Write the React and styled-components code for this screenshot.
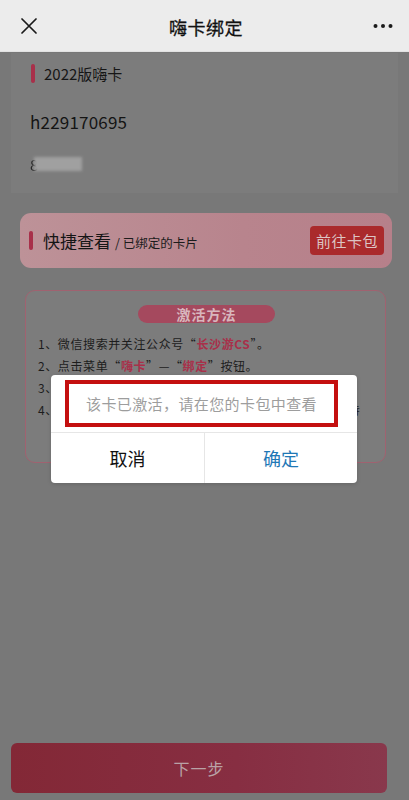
import React from "react";
import styled, { createGlobalStyle } from "styled-components";

const GlobalStyle = createGlobalStyle`
  html, body {
    margin: 0;
    padding: 0;
    background: #787878;
    font-family: "Noto Sans CJK SC", "Noto Sans", sans-serif;
  }
  * { box-sizing: border-box; }
`;

const Screen = styled.div`
  width: 409px;
  height: 800px;
  display: flex;
  flex-direction: column;
  background: #787878;
  position: relative;
  overflow: hidden;
`;

const Header = styled.header`
  height: 52px;
  flex: none;
  display: flex;
  align-items: center;
  justify-content: space-between;
  padding: 0 14px 0 17px;
  background: #ececec;
  border-bottom: 1px solid #e2e2e2;
`;

const HeaderTitle = styled.h1`
  margin: 0;
  font-size: 18px;
  font-weight: 400;
  color: #111;
  letter-spacing: 0.5px;
  padding-top: 3px;
  -webkit-text-stroke: 0.3px #111;
`;

const IconButton = styled.div`
  width: 24px;
  height: 24px;
  display: flex;
  align-items: center;
  justify-content: center;
`;

const Main = styled.main`
  flex: 1;
  display: flex;
  flex-direction: column;
  padding-top: 1px;
`;

const InfoCard = styled.section`
  margin: 0 11px 0 11px;
  height: 140px;
  background: #7c7c7c;
  padding: 10px 19px;
  display: flex;
  flex-direction: column;
`;

const SectionTitle = styled.div`
  display: flex;
  align-items: center;
  gap: 9px;
  font-size: 15px;
  color: #161616;
  padding-left: 1px;
`;

const Bar = styled.span`
  width: 4px;
  height: 19px;
  border-radius: 2px;
  background: #a8304a;
`;

const CardNo = styled.div`
  margin-top: 25px;
  font-size: 17px;
  color: #141414;
  letter-spacing: 0.2px;
`;

const Masked = styled.div`
  margin-top: 22px;
  display: flex;
  align-items: center;
  height: 16px;
`;

const MaskedDigit = styled.span`
  font-size: 15px;
  color: #222;
  filter: blur(0.6px);
`;

const MaskedBlur = styled.span`
  width: 48px;
  height: 14px;
  background: #a0a0a0;
  filter: blur(1.5px);
  margin-left: -4px;
`;

const QuickCard = styled.section`
  margin: 20px 17px 0 20px;
  height: 55px;
  border-radius: 11px;
  background: linear-gradient(90deg, #bd9298 0%, #b8848d 60%, #b6808a 100%);
  display: flex;
  align-items: center;
  justify-content: space-between;
  padding: 0 8px 0 9px;
`;

const QuickTitle = styled.div`
  display: flex;
  align-items: center;
  gap: 10px;
  font-size: 17px;
  color: #151515;
`;

const QuickSub = styled.span`
  font-size: 12.5px;
  margin-left: 4px;
  color: #1c1c1c;
`;

const SmallButton = styled.button`
  width: 74px;
  height: 29px;
  border: none;
  border-radius: 4px;
  background: #aa2a2c;
  color: #dcc4c4;
  font-family: inherit;
  font-size: 15px;
  letter-spacing: 0.5px;
  padding: 0;
`;

const GuideCard = styled.section`
  margin: 22px 23px 0 25px;
  height: 173px;
  border: 1.5px solid #a06270;
  border-radius: 10px;
  background: #7c7c7c;
  padding: 14px 10px 0 12px;
  display: flex;
  flex-direction: column;
  align-items: center;
  overflow: hidden;
`;

const Pill = styled.div`
  width: 137px;
  height: 18px;
  border-radius: 9px;
  background: #a5495e;
  color: #d8b6bd;
  font-size: 14px;
  font-weight: 700;
  line-height: 18px;
  text-align: center;
  letter-spacing: 1px;
`;

const Steps = styled.ol`
  list-style: none;
  margin: 11px 0 0 0;
  padding: 0;
  width: 100%;
  display: flex;
  flex-direction: column;
  gap: 3px;
`;

const Step = styled.li`
  font-size: 12px;
  line-height: 19px;
  letter-spacing: 0.6px;
  color: #1c1c1c;
  white-space: nowrap;
`;

const Em = styled.b`
  color: #a8304a;
`;

const Spacer = styled.div`
  flex: 1;
`;

const NextButton = styled.button`
  margin: 0 22px 7px 11px;
  height: 50px;
  border: none;
  border-radius: 6px;
  background: linear-gradient(90deg, #832836 0%, #872e42 60%, #89384c 100%);
  color: #b9a2a6;
  font-family: inherit;
  font-size: 16px;
  letter-spacing: 1px;
`;

const Dialog = styled.div`
  position: absolute;
  top: 375px;
  left: 51px;
  width: 306px;
  background: #fff;
  border-radius: 4px;
  display: flex;
  flex-direction: column;
  box-shadow: 0 1px 4px rgba(0, 0, 0, 0.15);
`;

const DialogBody = styled.div`
  height: 58px;
  padding: 5px 19px 5px 14px;
  border-bottom: 1px solid #e6e6e6;
`;

const Message = styled.div`
  height: 47px;
  border: 4px solid #c40f0f;
  display: flex;
  align-items: center;
  justify-content: center;
  color: #9d9d9d;
  font-size: 15px;
  letter-spacing: 0.4px;
`;

const DialogActions = styled.div`
  height: 50px;
  display: grid;
  grid-template-columns: 1fr 1fr;
`;

const DialogButton = styled.div`
  display: flex;
  align-items: center;
  justify-content: center;
  font-size: 18px;
  color: ${(p) => (p.primary ? "#1f78b6" : "#111")};
  border-left: ${(p) => (p.primary ? "1px solid #e6e6e6" : "none")};
`;

const CloseIcon = () => (
  <svg width="16" height="16" viewBox="0 0 16 16">
    <path d="M1 1 L15 15 M15 1 L1 15" stroke="#1a1a1a" strokeWidth="1.7" strokeLinecap="round" />
  </svg>
);

const MoreIcon = () => (
  <svg width="20" height="6" viewBox="0 0 20 6">
    <circle cx="2.5" cy="3" r="2" fill="#1a1a1a" />
    <circle cx="10" cy="3" r="2" fill="#1a1a1a" />
    <circle cx="17.5" cy="3" r="2" fill="#1a1a1a" />
  </svg>
);

export default function App() {
  return (
    <>
      <GlobalStyle />
      <Screen>
        <Header>
          <IconButton>
            <CloseIcon />
          </IconButton>
          <HeaderTitle>嗨卡绑定</HeaderTitle>
          <IconButton>
            <MoreIcon />
          </IconButton>
        </Header>
        <Main>
          <InfoCard>
            <SectionTitle>
              <Bar />
              2022版嗨卡
            </SectionTitle>
            <CardNo>h229170695</CardNo>
            <Masked>
              <MaskedDigit>8</MaskedDigit>
              <MaskedBlur />
            </Masked>
          </InfoCard>

          <QuickCard>
            <QuickTitle>
              <Bar />
              <span>
                快捷查看<QuickSub>/ 已绑定的卡片</QuickSub>
              </span>
            </QuickTitle>
            <SmallButton>前往卡包</SmallButton>
          </QuickCard>

          <GuideCard>
            <Pill>激活方法</Pill>
            <Steps>
              <Step>
                1、微信搜索并关注公众号“<Em>长沙游CS</Em>”。
              </Step>
              <Step>
                2、点击菜单“<Em>嗨卡</Em>”—“<Em>绑定</Em>”按钮。
              </Step>
              <Step>3、输入卡号与激活码，点击下方“下一步”可完成绑定。</Step>
              <Step>4、绑定成功后即可在“我的卡包”中查看，入园时请保持</Step>
            </Steps>
          </GuideCard>

          <Spacer />
          <NextButton>下一步</NextButton>
        </Main>

        <Dialog>
          <DialogBody>
            <Message>该卡已激活，请在您的卡包中查看</Message>
          </DialogBody>
          <DialogActions>
            <DialogButton>取消</DialogButton>
            <DialogButton primary>确定</DialogButton>
          </DialogActions>
        </Dialog>
      </Screen>
    </>
  );
}
